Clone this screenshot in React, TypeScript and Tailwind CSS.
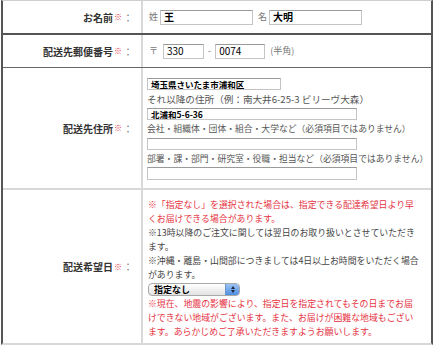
import { ReactNode } from 'react';

const red = 'text-[#e5333f]';

function Label({ children }: { children: ReactNode }) {
	return (
		<div className="flex items-center justify-end pr-[8px] border-r-2 border-[#d8d8d8]">
			<span className="text-[10px] font-bold text-[#333] whitespace-nowrap">{children}</span>
			<span className={`text-[8px] ${red} ml-[1px]`}>※</span>
			<span className="text-[10px] text-[#777] ml-[1px]">：</span>
		</div>
	);
}

function Field({ value, className }: { value?: string; className: string }) {
	return (
		<div
			className={`border border-[#c4c4c4] border-t-[#9a9a9a] bg-white pl-[3px] font-bold text-black flex items-center leading-none whitespace-nowrap overflow-hidden ${className}`}
		>
			{value}
		</div>
	);
}

function SelectBox() {
	return (
		<div className="flex h-[13px] w-[92px] rounded-[4px] border border-[#a9a9a9] bg-gradient-to-b from-white to-[#e2e2e2] overflow-hidden">
			<span className="flex-1 pl-[5px] text-[9px] font-bold leading-[11px] text-black">指定なし</span>
			<span className="w-[14px] flex flex-col items-center justify-center gap-[1px] bg-gradient-to-b from-[#9cc3f3] to-[#4f8fe0] border-l border-[#6a97d0]">
				<span className="w-0 h-0 border-l-[2px] border-r-[2px] border-b-[3px] border-l-transparent border-r-transparent border-b-[#1c2a40]" />
				<span className="w-0 h-0 border-l-[2px] border-r-[2px] border-t-[3px] border-l-transparent border-r-transparent border-t-[#1c2a40]" />
			</span>
		</div>
	);
}

export default function App() {
	return (
		<div className="w-[434px] h-[347px] bg-white font-['Noto_Sans_CJK_JP',sans-serif] text-[#444]">
			<div className="ml-[1px] w-[432px] border-l-2 border-r-2 border-[#555] border-t border-t-[#cfcfcf] border-b-2 border-b-[#d8d8d8]">
				{/* name */}
				<div className="grid grid-cols-[140px_1fr] h-[34px] border-b-2 border-[#555]">
					<Label>お名前</Label>
					<div className="flex items-center pl-[6px] text-[9px] text-[#777]">
						<span>姓</span>
						<Field value="王" className="ml-[2px] w-[93px] h-[15px] text-[10px]" />
						<span className="ml-[5px]">名</span>
						<Field value="大明" className="ml-[2px] w-[93px] h-[15px] text-[10px]" />
					</div>
				</div>
				{/* zip */}
				<div className="grid grid-cols-[140px_1fr] h-[33px] border-b border-[#666]">
					<Label>配送先郵便番号</Label>
					<div className="flex items-center pl-[6px] text-[9px] text-[#777]">
						<span>〒</span>
						<Field value="330" className="ml-[5px] w-[41px] h-[15px] text-[10px] !font-normal" />
						<span className="ml-[4px]">-</span>
						<Field value="0074" className="ml-[4px] w-[50px] h-[15px] text-[10px] !font-normal" />
						<span className="ml-[5px]">(半角)</span>
					</div>
				</div>
				{/* address */}
				<div className="grid grid-cols-[140px_1fr] h-[122px] border-b-2 border-[#d8d8d8]">
					<Label>配送先住所</Label>
					<div className="flex flex-col pl-[4px] pt-[10px] text-[9px] text-[#555]">
						<Field value="埼玉県さいたま市浦和区" className="w-[134px] h-[12px] text-[8.5px]" />
						<div className="leading-[18px] whitespace-nowrap text-[9.6px]">それ以降の住所（例：南大井6-25-3 ビリーヴ大森）</div>
						<Field value="北浦和5-6-36" className="w-[210px] h-[12px] text-[8.5px]" />
						<div className="leading-[18px] whitespace-nowrap text-[8.8px]">会社・組織体・団体・組合・大学など（必須項目ではありません）</div>
						<Field className="w-[210px] h-[12px]" />
						<div className="leading-[17px] whitespace-nowrap text-[8.8px]">部署・課・部門・研究室・役職・担当など（必須項目ではありません）</div>
						<Field className="w-[210px] h-[13px]" />
					</div>
				</div>
				{/* date */}
				<div className="grid grid-cols-[140px_1fr] h-[153px]">
					<Label>配送希望日</Label>
					<div className="flex flex-col pl-[5px] pt-[8px] text-[8.9px] leading-[14px] whitespace-nowrap text-[#444]">
						<div className={red}>※「指定なし」を選択された場合は、指定できる配達希望日より早</div>
						<div className={red}>くお届けできる場合があります。</div>
						<div>※13時以降のご注文に関しては翌日のお取り扱いとさせていただき</div>
						<div>ます。</div>
						<div>※沖縄・離島・山間部につきましては4日以上お時間をいただく場合</div>
						<div>があります。</div>
						<div className="py-[1px]">
							<SelectBox />
						</div>
						<div className={red}>※現在、地震の影響により、指定日を指定されてもその日までお届</div>
						<div className={red}>けできない地域がございます。また、お届けが困難な地域もござい</div>
						<div className={red}>ます。あらかじめご了承いただきますようお願いします。</div>
					</div>
				</div>
			</div>
		</div>
	);
}
